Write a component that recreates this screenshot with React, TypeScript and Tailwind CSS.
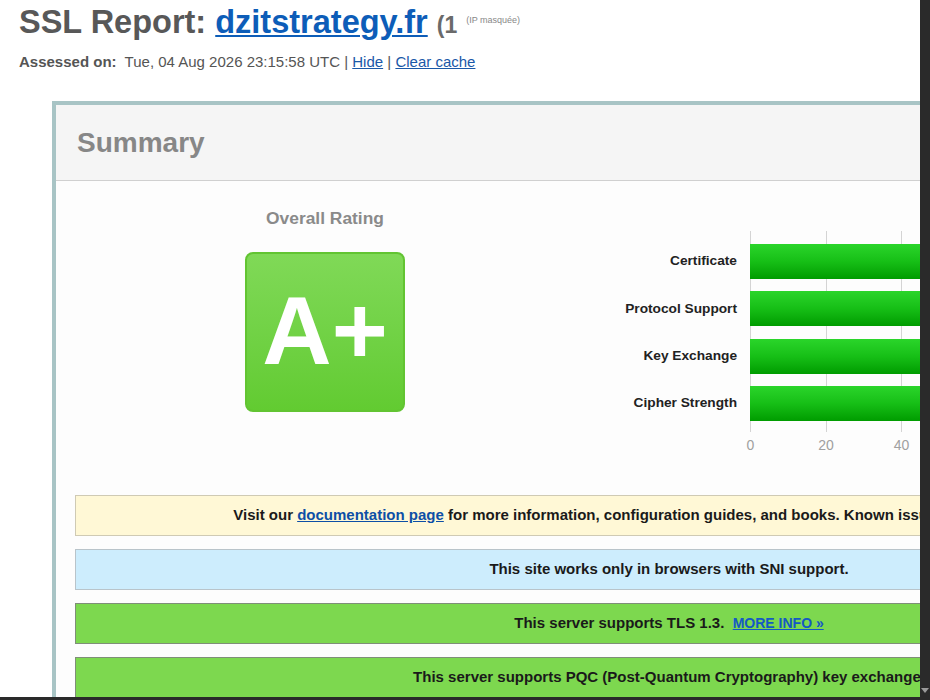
const bars = [
  { label: 'Certificate', value: 100 },
  { label: 'Protocol Support', value: 100 },
  { label: 'Key Exchange', value: 100 },
  { label: 'Cipher Strength', value: 100 },
]

const ticks = [0, 20, 40, 60, 80, 100]
// only the first ticks fit in the window
const tickLabels = [0, 20, 40]
const plotWidth = 377.5

function Chart() {
  return (
    <div className="mt-[23px] ml-[175px] flex flex-col">
      <div className="relative pt-[13px] pb-[11px]">
        {/* grid lines */}
        {ticks.map(t => (
          <div
            key={t}
            className="absolute top-0 bottom-0 w-px bg-[#d4d4d4]"
            style={{ left: 150 + (t / 100) * plotWidth }}
          />
        ))}
        <div className="relative flex flex-col gap-[12.3px]">
          {bars.map(b => (
            <div key={b.label} className="flex items-center h-[35px]">
              <div className="w-[150px] pr-[13px] text-right text-[13.7px] font-bold text-[#222]">{b.label}</div>
              <div
                className="h-[35px] bg-linear-to-b from-[#2ad52a] via-[#16bf16] to-[#009c00]"
                style={{ width: (b.value / 100) * plotWidth }}
              />
            </div>
          ))}
        </div>
      </div>
      <div className="relative h-[24px] mt-[5px]">
        {tickLabels.map(t => (
          <span
            key={t}
            className="absolute top-0 -translate-x-1/2 text-[14px] leading-4 text-[#a0a0a0]"
            style={{ left: 150.5 + (t / 100) * plotWidth }}
          >
            {t}
          </span>
        ))}
      </div>
    </div>
  )
}

function Message({ tone, children }: { tone: 'yellow' | 'blue' | 'green'; children: React.ReactNode }) {
  const tones = {
    yellow: 'bg-[#fff8d6] border-[#cfcab4]',
    blue: 'bg-[#cdedfd] border-[#b9c4ca]',
    green: 'bg-[#7dd84f] border-[#7f8f78]',
  }
  return (
    <div className={`h-[41px] mb-[13px] border flex items-center justify-center text-[15px] font-bold text-[#1a1a1a] ${tones[tone]}`}>
      <span className="whitespace-nowrap">{children}</span>
    </div>
  )
}

export default function App() {
  return (
    <div className="w-[930px] h-[700px] bg-[#2a2a2a] font-['Liberation_Sans',Arial,sans-serif] overflow-hidden">
      <div className="flex h-[697px]">
        <div className="w-[920px] h-full bg-white overflow-hidden pl-[19px]">
          <div className="whitespace-nowrap text-[32.5px] leading-[40px] font-bold text-[#585858]">
            SSL Report:{' '}
            <a href="#" className="text-[#0d5db8] underline decoration-2 underline-offset-2">dzitstrategy.fr</a>{' '}
            <span className="text-[23px] text-[#6a6a6a]">(1</span>{' '}
            <span className="text-[9px] font-normal text-[#888] align-[10px]">(IP masquée)</span>
          </div>
          <div className="mt-[7px] text-[15px] leading-5 text-[#555] whitespace-nowrap">
            <span className="font-bold">Assessed on:</span>
            &nbsp; Tue, 04 Aug 2026 23:15:58 UTC |{' '}
            <a href="#" className="text-[#1a58a8] underline">Hide</a> |{' '}
            <a href="#" className="text-[#1a58a8] underline">Clear cache</a>
          </div>

          {/* Summary box */}
          <div className="mt-[29px] ml-[33px] w-[1230px] border-l-4 border-t-4 border-[#a8c4c5] bg-[#fdfdfd]">
            <div className="h-[76px] bg-[#f5f5f5] border-b border-[#d0d0d0] flex items-center pl-[21px]">
              <h2 className="text-[28px] font-bold text-[#878787]">Summary</h2>
            </div>

            <div className="pt-[27px] px-[19px]">
              <div className="flex items-start -ml-[19px]">
                <div className="ml-[169px] w-[200px] flex flex-col items-center">
                  <div className="text-[17.4px] leading-5 font-bold text-[#8a8a8a]">Overall Rating</div>
                  <div className="mt-[24px] w-[160px] h-[160px] rounded-[8px] border-2 border-[#62c432] bg-linear-to-b from-[#80d957] to-[#62cb31] flex items-center justify-center">
                    <span className="text-[96px] leading-none font-bold text-white -mt-[2px]">A+</span>
                  </div>
                </div>
                <Chart />
              </div>

              <div className="mt-[34px]">
                <Message tone="yellow">
                  Visit our <a href="#" className="text-[#0d4fa6] underline">documentation page</a> for more information, configuration guides, and books. Known issues are documented here.
                </Message>
                <Message tone="blue">This site works only in browsers with SNI support.</Message>
                <Message tone="green">
                  This server supports TLS 1.3.&nbsp;{' '}
                  <a href="#" className="text-[#1459c4] underline text-[14px]">MORE INFO »</a>
                </Message>
                <Message tone="green">This server supports PQC (Post-Quantum Cryptography) key exchange.</Message>
              </div>
            </div>
          </div>
        </div>
        <div className="w-[10px] h-full bg-[#2a2a2a] flex flex-col justify-end items-center pb-[4px]">
          <div className="w-0 h-0 border-l-[4px] border-r-[4px] border-t-[5px] border-l-transparent border-r-transparent border-t-[#9a9a9a]" />
        </div>
      </div>
    </div>
  )
}
